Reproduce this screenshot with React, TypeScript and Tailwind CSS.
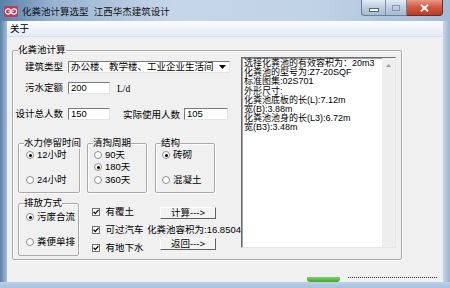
import React from "react";

const etched = "border border-[#a9a9a9] shadow-[inset_1px_1px_0_#ffffff,1px_1px_0_#ffffff]";
const sunken = "border border-t-[#7a7a7a] border-l-[#7a7a7a] border-r-[#e3e3e3] border-b-[#e3e3e3] bg-white";

function GroupBox({ title, className, children }: { title: string; className: string; children?: React.ReactNode }) {
  return (
    <fieldset className={`${etched} min-w-0 rounded-[2px] ${className}`}>
      <legend className="ml-[5px] whitespace-nowrap bg-[#f0f0f0] leading-[12px]">{title}</legend>
      {children}
    </fieldset>
  );
}

function Radio({ label, checked, className }: { label: string; checked?: boolean; className: string }) {
  return (
    <div className={`flex h-[12px] items-center ${className}`}>
      <span className="flex h-[8px] w-[8px] items-center justify-center rounded-full border border-[#8c8c8c] bg-white">
        {checked && <span className="h-[3px] w-[3px] rounded-full bg-black" />}
      </span>
      <span className="ml-[3px] whitespace-nowrap">{label}</span>
    </div>
  );
}

function Check({ label, className }: { label: string; className: string }) {
  return (
    <div className={`flex h-[12px] items-center ${className}`}>
      <span className="flex h-[8px] w-[8px] items-center justify-center border border-[#707070] bg-white">
        <svg width="6" height="6" viewBox="0 0 6 6">
          <path d="M0.6 2.8 L2.3 4.6 L5.5 0.9" fill="none" stroke="#000" strokeWidth="1.3" />
        </svg>
      </span>
      <span className="ml-[5px] whitespace-nowrap">{label}</span>
    </div>
  );
}

function Btn({ label, className }: { label: string; className: string }) {
  return (
    <div
      className={`flex h-[12px] w-[56px] items-center justify-center border border-t-white border-l-white border-r-[#5f5f5f] border-b-[#5f5f5f] bg-[#f3f3f3] leading-none ${className}`}
    >
      {label}
    </div>
  );
}

function Field({ value, className }: { value: string; className: string }) {
  return <div className={`${sunken} h-[12px] pl-[2px] leading-[10px] ${className}`}>{value}</div>;
}

const result = [
  "选择化粪池的有效容积为：20m3",
  "化粪池的型号为:Z7-20SQF",
  "标准图集:02S701",
  "外形尺寸:",
  "化粪池底板的长(L):7.12m",
  "宽(B):3.88m",
  "化粪池池身的长(L3):6.72m",
  "宽(B3):3.48m",
];

export default function App() {
  return (
    <div className="flex h-[288px] w-[450px] flex-col overflow-hidden bg-[#b8cce3] font-['Liberation_Sans','Noto_Sans_CJK_SC',sans-serif] text-[9.5px] text-black">
      {/* title bar */}
      <div className="flex h-[21px] items-start bg-[linear-gradient(90deg,#5a80aa_0%,#98b3d1_12%,#c6d6e8_38%,#c0d2e6_70%,#a3bbd7_100%)]">
        <svg className="ml-[4px] mt-[6px]" width="14" height="11" viewBox="0 0 14 11">
          <rect x="0" y="0" width="14" height="11" rx="1.5" fill="#c23a55" />
          <circle cx="4" cy="5.5" r="2.6" fill="none" stroke="#fff" strokeWidth="1.2" />
          <circle cx="10" cy="5.5" r="2.6" fill="none" stroke="#fff" strokeWidth="1.2" />
          <path d="M4 5.5 L10 5.5" stroke="#f3b7c4" strokeWidth="1" />
        </svg>
        <span className="ml-[4px] mt-[5px] leading-[13px] text-[#111]">化粪池计算选型&nbsp;&nbsp;江西华杰建筑设计</span>
        <div className="ml-auto mr-[7px] flex h-[16px]">
          <div className="flex overflow-hidden rounded-bl-[4px] border border-t-0 border-[#6d7f96] bg-[linear-gradient(180deg,#e3ebf4_0%,#bccde0_50%,#a6bbd3_100%)]">
            <div className="flex w-[24px] items-center justify-center border-r border-[#7f90a6]">
              <span className="mt-[4px] h-[2px] w-[8px] bg-white shadow-[0_0_0_1px_#51627a]" />
            </div>
            <div className="flex w-[20px] items-center justify-center">
              <span className="h-[6px] w-[8px] border border-[#8796aa] bg-transparent" />
            </div>
          </div>
          <div className="flex w-[36px] items-center justify-center rounded-br-[4px] border border-t-0 border-l-0 border-[#6b2b22] bg-[linear-gradient(180deg,#e99a88_0%,#d35a43_45%,#c0391f_100%)]">
            <svg width="9" height="8" viewBox="0 0 9 8">
              <path d="M1 0.8 L8 7.2 M8 0.8 L1 7.2" stroke="#fff" strokeWidth="2" />
            </svg>
          </div>
        </div>
      </div>

      <div className="flex flex-1">
        <div className="w-[7px] bg-[linear-gradient(90deg,#5b80a9,#a6bdd8)]" />

        {/* client */}
        <div className="flex flex-1 flex-col bg-[#f0f0f0]">
          <div className="flex h-[16px] items-center border-b border-[#d8e1ec] bg-[linear-gradient(180deg,#fbfcfe,#e4ebf5)] pl-[3px]">
            <span className="leading-none">关于</span>
          </div>

          <GroupBox title="化粪池计算" className="ml-[5px] mt-[7px] h-[216px] w-[390px]">
            <div className="flex">
              {/* left form */}
              <div className="flex w-[228px] flex-col overflow-hidden">
                <div className="mt-[5px] flex h-[12px] items-center">
                  <span className="w-[50px] text-right">建筑类型</span>
                  <div className={`${sunken} ml-[5px] flex h-[12px] w-[162px] items-center`}>
                    <span className="ml-[2px] flex-1 whitespace-nowrap leading-none">办公楼、教学楼、工业企业生活间</span>
                    <span className="flex h-full w-[13px] items-center justify-center">
                      <svg width="7" height="4" viewBox="0 0 7 4">
                        <path d="M0 0 L7 0 L3.5 4 Z" fill="#000" />
                      </svg>
                    </span>
                  </div>
                </div>

                <div className="mt-[9px] flex h-[12px] items-center">
                  <span className="w-[50px] text-right">污水定额</span>
                  <Field value="200" className="ml-[5px] w-[42px]" />
                  <span className="ml-[7px] mt-[3px] font-['Liberation_Serif',serif]">L/d</span>
                </div>

                <div className="mt-[14px] flex h-[12px] items-center">
                  <span className="w-[50px] whitespace-nowrap text-right">设计总人数</span>
                  <Field value="150" className="ml-[5px] w-[42px]" />
                  <span className="ml-[13px] mt-[3px] whitespace-nowrap">实际使用人数</span>
                  <Field value="105" className="ml-[4px] w-[44px]" />
                </div>

                <div className="mt-[17px] flex">
                  <GroupBox title="水力停留时间" className="ml-[5px] h-[56px] w-[62px]">
                    <Radio label="12小时" checked className="ml-[7px]" />
                    <Radio label="24小时" className="ml-[7px] mt-[13px]" />
                  </GroupBox>
                  <GroupBox title="清掏周期" className="ml-[7px] h-[56px] w-[60px]">
                    <Radio label="90天" className="ml-[6px]" />
                    <Radio label="180天" checked className="ml-[6px]" />
                    <Radio label="360天" className="ml-[6px] mt-[1px]" />
                  </GroupBox>
                  <GroupBox title="结构" className="ml-[8px] h-[56px] w-[60px]">
                    <Radio label="砖砌" checked className="ml-[6px]" />
                    <Radio label="混凝土" className="ml-[6px] mt-[13px]" />
                  </GroupBox>
                </div>

                <div className="mt-[4px] flex">
                  <GroupBox title="排放方式" className="ml-[5px] h-[59px] w-[62px]">
                    <Radio label="污废合流" checked className="ml-[7px] mt-[2px]" />
                    <Radio label="粪便单排" className="ml-[7px] mt-[13px]" />
                  </GroupBox>
                  <div className="ml-[13px] flex w-[55px] flex-col">
                    <Check label="有覆土" className="mt-[9px]" />
                    <Check label="可过汽车" className="mt-[6px]" />
                    <Check label="有地下水" className="mt-[6px]" />
                  </div>
                  <div className="flex flex-col">
                    <Btn label="计算--->" className="ml-[13px] mt-[10px]" />
                    <span className="mt-[5px] whitespace-nowrap leading-[12px]">化粪池容积为:16.8504</span>
                    <Btn label="返回--->" className="ml-[13px] mt-[2px]" />
                  </div>
                </div>
              </div>

              {/* result box */}
              <div className="mt-[1px] flex h-[191px] w-[155px] border border-t-[#6e6e6e] border-l-[#6e6e6e] border-r-[#e6e6e6] border-b-[#e6e6e6] bg-white shadow-[inset_1px_1px_0_#a0a0a0]">
                <div className="flex-1 whitespace-nowrap pl-[2px] pt-[1px] text-[9px] leading-[9.2px]">
                  {result.map((line) => (
                    <div key={line}>{line}</div>
                  ))}
                </div>
                <div className="flex w-[13px] flex-col items-center bg-[#eeeeee]">
                  <svg className="mt-[6px]" width="5" height="3" viewBox="0 0 5 3">
                    <path d="M0 3 L2.5 0 L5 3 Z" fill="#9a9a9a" />
                  </svg>
                </div>
              </div>
            </div>
          </GroupBox>

          <div className="flex flex-1 items-end justify-end pr-[6px]">
            <span className="h-[5px] w-[33px] rounded-b-[3px] bg-[linear-gradient(180deg,#7ed36a,#3ea52e)]" />
            <span className="mb-[4px] ml-[8px] h-[1px] w-[89px] border-t border-dotted border-[#3a3a3a]" />
          </div>
        </div>

        <div className="w-[7px] bg-[linear-gradient(90deg,#c5d6ea,#98b1ce)]" />
      </div>
      <div className="h-[6px] bg-[linear-gradient(180deg,#bcd1e8,#a8c0dc)]" />
    </div>
  );
}
